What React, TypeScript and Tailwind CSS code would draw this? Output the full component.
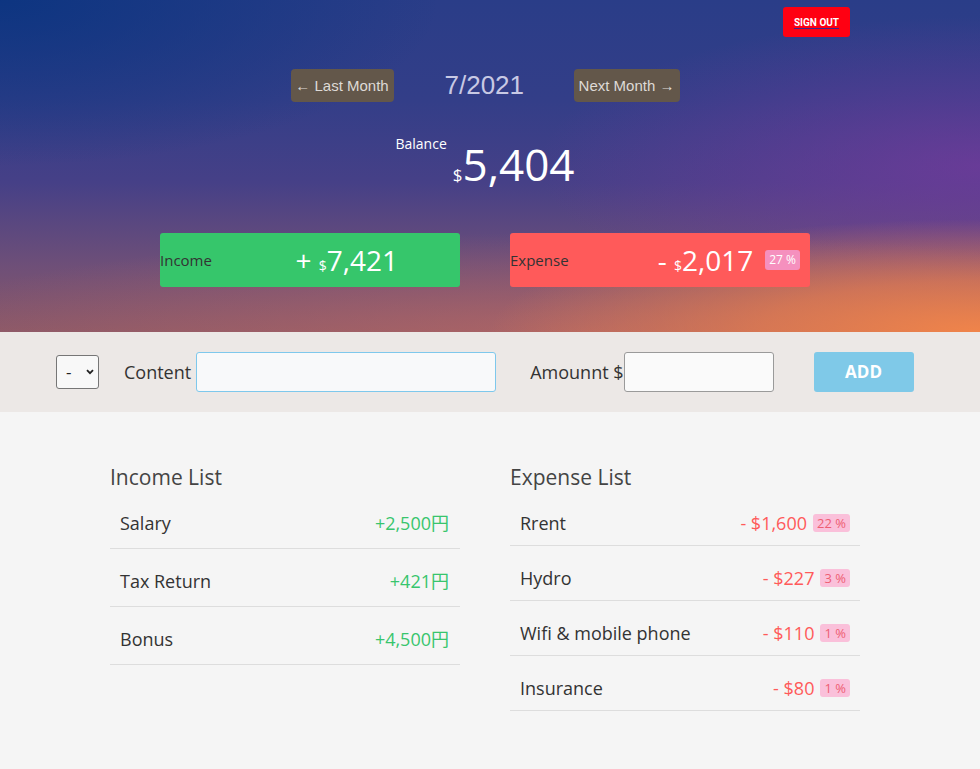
import React, { useState } from 'react';

interface Entry {
  title: string;
  amount: string;
  percent?: string;
}

const incomes: Entry[] = [
  { title: 'Salary', amount: '+2,500円' },
  { title: 'Tax Return', amount: '+421円' },
  { title: 'Bonus', amount: '+4,500円' },
];

const expenses: Entry[] = [
  { title: 'Rrent', amount: '- $1,600', percent: '22 %' },
  { title: 'Hydro', amount: '- $227', percent: '3 %' },
  { title: 'Wifi & mobile phone', amount: '- $110', percent: '1 %' },
  { title: 'Insurance', amount: '- $80', percent: '1 %' },
];

const App = () => {
  const [type, setType] = useState('-');
  const [content, setContent] = useState('');
  const [amount, setAmount] = useState('');

  return (
    <div className="min-h-screen bg-[#f5f5f5] font-['Open_Sans','Noto_Sans_CJK_JP',sans-serif]">
      {/* header with sky background */}
      <div className="h-[332px] flex flex-col bg-[radial-gradient(ellipse_50%_34%_at_100%_100%,#f0844a_0%,rgba(236,128,76,0.7)_45%,rgba(236,128,76,0)_100%),radial-gradient(ellipse_70%_30%_at_60%_100%,rgba(200,110,100,0.55)_0%,rgba(200,110,100,0)_100%),radial-gradient(ellipse_45%_45%_at_100%_50%,rgba(120,58,158,0.7)_0%,rgba(120,58,158,0)_100%),radial-gradient(ellipse_45%_50%_at_0%_0%,rgba(10,52,128,0.9)_0%,rgba(10,52,128,0)_100%),linear-gradient(180deg,#2a3d88_0%,#333e88_30%,#464087_55%,#6e4f78_80%,#8a5868_100%)]">
        <div className="flex justify-end pt-[7px] pr-[130px]">
          <button className="w-[67px] h-[30px] rounded-[3px] bg-[#ff0012] flex items-center justify-center">
            <span className="font-['Roboto',sans-serif] text-[10px] font-bold text-white underline decoration-[#3b2a8c] underline-offset-2">
              SIGN OUT
            </span>
          </button>
        </div>

        <div className="mt-[31px] flex justify-center items-center gap-[51px] pr-[10px] font-['Liberation_Sans',Arial,sans-serif]">
          <button className="w-[103px] h-[33px] pt-[2px] rounded-[4px] bg-[#63574a] text-[15px] text-[#dedad6] whitespace-nowrap">
            ← Last Month
          </button>
          <div className="w-[78px] text-center text-[26px] leading-[33px] text-[#c8c9e4] pt-[1px]">7/2021</div>
          <button className="w-[106px] h-[33px] pt-[2px] rounded-[4px] bg-[#63574a] text-[15px] text-[#dedad6] whitespace-nowrap">
            Next Month →
          </button>
        </div>

        <div className="mt-[32px] flex justify-center pr-[10px] text-white">
          <div className="flex items-start">
            <span className="text-[14px] leading-[19px]">Balance</span>
            <span className="mt-[8px] ml-[6px] leading-none">
              <span className="text-[17px]">$</span>
              <span className="text-[44px]">5,404</span>
            </span>
          </div>
        </div>

        <div className="mt-[47px] flex justify-center gap-[50px] pr-[10px]">
          <div className="w-[300px] h-[54px] rounded-[3px] bg-[#36c66b] flex items-center justify-between pr-[62px]">
            <span className="text-[15px] text-[#333]">Income</span>
            <span className="text-[28px] leading-none text-white">
              + <span className="text-[14px]">$</span>7,421
            </span>
          </div>
          <div className="w-[300px] h-[54px] rounded-[3px] bg-[#ff5a5a] flex items-center justify-between pr-[10px]">
            <span className="text-[15px] text-[#333]">Expense</span>
            <div className="flex items-center">
              <span className="text-[28px] leading-none text-white">
                - <span className="text-[14px]">$</span>2,017
              </span>
              <span className="ml-[12px] h-[20px] px-[4px] rounded-[3px] bg-[#f590be] text-[12px] leading-[20px] text-white">
                27 %
              </span>
            </div>
          </div>
        </div>
      </div>

      {/* add form */}
      <div className="h-[80px] bg-[#ece8e6] flex items-center pl-[56px] text-[18px] text-[#333]">
        <div className="relative">
          <select
            value={type}
            onChange={(e) => setType(e.target.value)}
            className="appearance-none w-[43px] h-[34px] pl-[9px] border border-[#767676] rounded-[3px] bg-[#f8f8f8] text-[17px] text-[#222] outline-none"
          >
            <option value="-">-</option>
            <option value="+">+</option>
          </select>
          <svg
            className="absolute right-[5px] top-[14px] pointer-events-none"
            width="8"
            height="6"
            viewBox="0 0 8 6"
            fill="none"
          >
            <path d="M1 1.2 L4 4.2 L7 1.2" stroke="#222" strokeWidth="1.8" />
          </svg>
        </div>
        <label className="ml-[25px]">Content</label>
        <input
          value={content}
          onChange={(e) => setContent(e.target.value)}
          className="ml-[5px] w-[300px] h-[40px] px-2 border border-[#7ec8ec] rounded-[3px] bg-[#f8f9fa] outline-none"
        />
        <label className="ml-[34px]">Amounnt $</label>
        <input
          value={amount}
          onChange={(e) => setAmount(e.target.value)}
          className="w-[150px] h-[40px] px-2 border border-[#9a9a9a] rounded-[3px] bg-[#fafafa] outline-none"
        />
        <button className="ml-[40px] w-[100px] h-[40px] rounded-[3px] bg-[#7fc9e8] text-white font-bold text-[17px]">
          ADD
        </button>
      </div>

      {/* lists */}
      <div className="pt-[51px] flex justify-center gap-[50px] pr-[10px] pb-10">
        <div className="w-[350px]">
          <h2 className="text-[21px] leading-[28px] text-[#444]">Income List</h2>
          <ul>
            {incomes.map((item, index) => (
              <li
                key={index}
                className="flex justify-between border-b border-[#dddddd] pt-[19px] pb-[12px] pl-[10px] pr-[11px] text-[18px] leading-[26px] text-[#333]"
              >
                <span>{item.title}</span>
                <span className="text-[#38c56d]">{item.amount}</span>
              </li>
            ))}
          </ul>
        </div>
        <div className="w-[350px]">
          <h2 className="text-[21px] leading-[28px] text-[#444]">Expense List</h2>
          <ul>
            {expenses.map((item, index) => (
              <li
                key={index}
                className="flex justify-between border-b border-[#dddddd] pt-[19px] pb-[9px] pl-[10px] pr-[10px] text-[18px] leading-[26px] text-[#333]"
              >
                <span>{item.title}</span>
                <span className="flex items-center">
                  <span className="text-[#ff5a5a]">{item.amount}</span>
                  <span className="ml-[6px] h-[18px] px-[4px] rounded-[3px] bg-[#fac0da] text-[13px] leading-[18px] text-[#ee5e73]">
                    {item.percent}
                  </span>
                </span>
              </li>
            ))}
          </ul>
        </div>
      </div>
    </div>
  );
};

export default App;
